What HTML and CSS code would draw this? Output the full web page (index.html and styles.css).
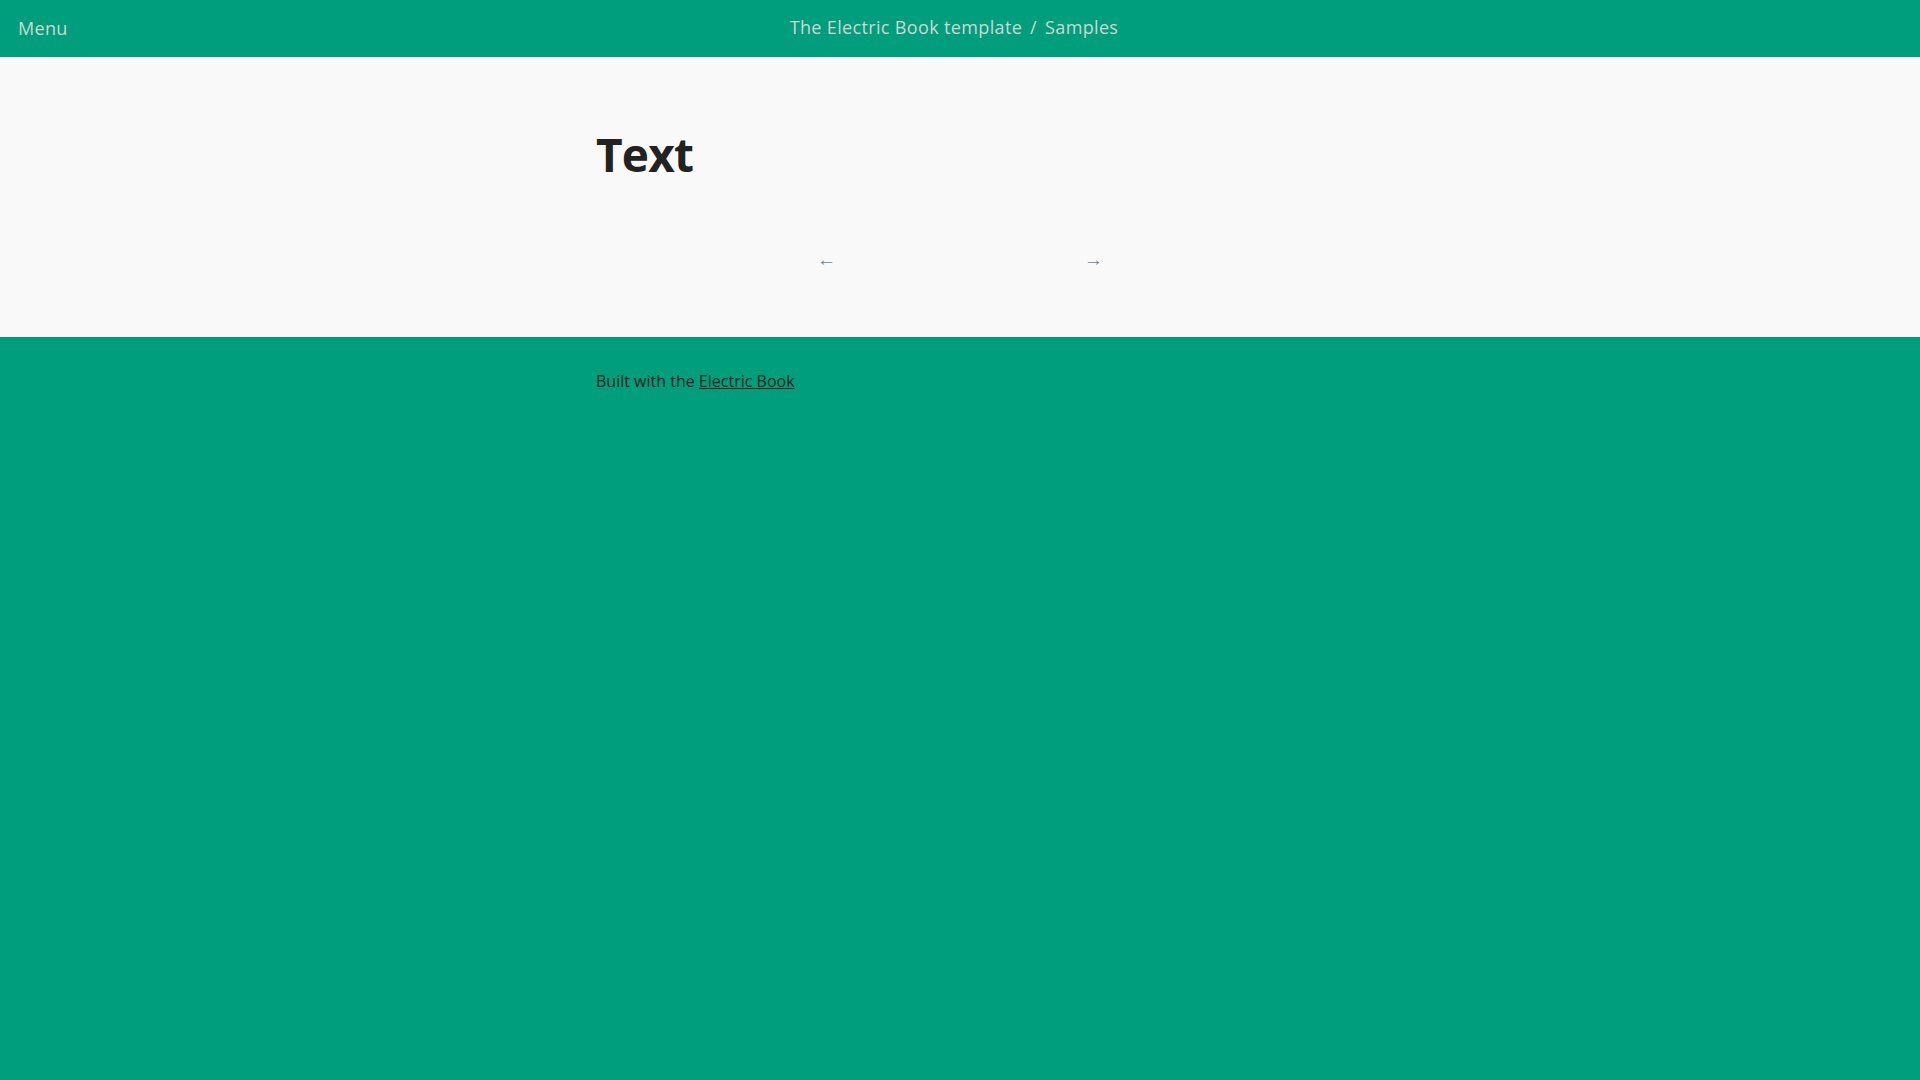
FILE: index.html
```html
<!DOCTYPE html>
<html lang="en">
<head>
<meta charset="utf-8">
<title>Text</title>
<link rel="stylesheet" href="styles.css">
</head>
<body>
<header class="topbar">
  <a class="menu-link" href="#">Menu</a>
  <div class="site-title"><a href="#">The Electric Book template</a><span class="sep">/</span><a href="#">Samples</a></div>
  <div class="spacer"></div>
</header>
<main class="page">
  <div class="content">
    <h1 class="title">Text</h1>
    <nav class="pager">
      <a class="prev" href="#">&larr;</a>
      <a class="next" href="#">&rarr;</a>
    </nav>
  </div>
</main>
<footer class="footer">
  <div class="content">
    <p class="credit">Built with the <a href="#">Electric Book</a></p>
  </div>
</footer>
</body>
</html>
```

FILE: styles.css
```css
html, body {
  margin: 0;
  padding: 0;
  height: 100%;
}
body {
  background: #009e7d;
  font-family: "Open Sans", "Noto Sans", sans-serif;
  color: #222;
}
a { color: inherit; text-decoration: none; }

.topbar {
  height: 57px;
  box-sizing: border-box;
  padding: 0 18px 3px;
  display: grid;
  grid-template-columns: 1fr auto 1fr;
  align-items: center;
  color: #cfd6d3;
  font-size: 18px;
}
.menu-link {
  justify-self: start;
  letter-spacing: 0.3px;
  padding-top: 2px;
}
.site-title {
  justify-self: center;
  margin-left: -12px;
  letter-spacing: 0.35px;
}
.sep {
  margin: 0 8px;
}

.page {
  background: #f9f9f9;
  height: 280px;
}
.content {
  width: 728px;
  margin: 0 auto;
}
.title {
  margin: 0;
  padding-top: 74px;
  font-size: 46px;
  line-height: 1;
  font-weight: 700;
  color: #222;
  letter-spacing: -0.8px;
}
.pager {
  display: flex;
  justify-content: space-between;
  width: 286px;
  margin: 69px auto 0;
  color: #6f7f93;
  font-size: 19px;
}
.footer .content {
  padding-top: 33px;
}
.credit {
  margin: 0;
  font-size: 16px;
  color: #222;
}
.credit a {
  text-decoration: underline;
}
```
